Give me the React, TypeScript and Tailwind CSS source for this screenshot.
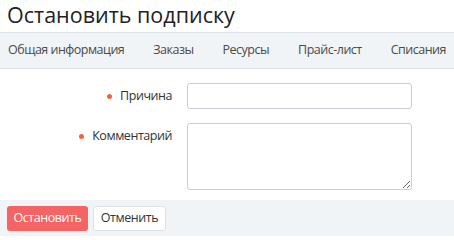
import React from 'react';

const tabs = ['Общая информация', 'Заказы', 'Ресурсы', 'Прайс-лист', 'Списания'];

const Label: React.FC<{ text: string }> = ({ text }) => (
  <div className="flex items-center justify-end gap-[8px] text-[12.5px] tracking-[-0.45px] text-[#333333]">
    <span className="w-[5px] h-[5px] rounded-full bg-[#f0643c]" />
    <span>{text}</span>
  </div>
);

export default function App() {
  return (
    <div className="w-[454px] h-[240px] bg-white overflow-hidden" style={{ fontFamily: '"Open Sans", sans-serif' }}>
      <h1 className="h-[32px] pl-[7px] pt-[1px] text-[21.5px] leading-[28px] text-[#222222]">Остановить подписку</h1>
      <div className="h-[37px] flex items-center gap-[29px] pl-[8px] bg-[#f1f4f7] border-y border-[#dde2e8] text-[12.5px] tracking-[-0.5px] text-[#4a4a4a] whitespace-nowrap">
        {tabs.map((t) => (
          <span key={t}>{t}</span>
        ))}
      </div>
      <div className="pt-[14px] flex flex-col gap-[14px]">
        <div className="flex items-center">
          <div className="w-[172px]"><Label text="Причина" /></div>
          <input className="ml-[15px] w-[225px] h-[26px] border border-[#c9ced6] rounded-[3px] bg-white" />
        </div>
        <div className="flex items-start">
          <div className="w-[172px] pt-[4px]"><Label text="Комментарий" /></div>
          <textarea className="ml-[15px] w-[225px] h-[67px] border border-[#c9ced6] rounded-[3px] bg-white block" />
        </div>
      </div>
      <div className="mt-[10px] h-[36px] bg-[#f1f4f7] flex items-center gap-[5px] pl-[7px] text-[12.5px] tracking-[-0.45px]">
        <button className="h-[25px] w-[81px] rounded-[3px] bg-[#f46464] text-white">Остановить</button>
        <button className="h-[25px] w-[73px] rounded-[3px] bg-white border border-[#dde2e8] text-[#333333]">Отменить</button>
      </div>
    </div>
  );
}
